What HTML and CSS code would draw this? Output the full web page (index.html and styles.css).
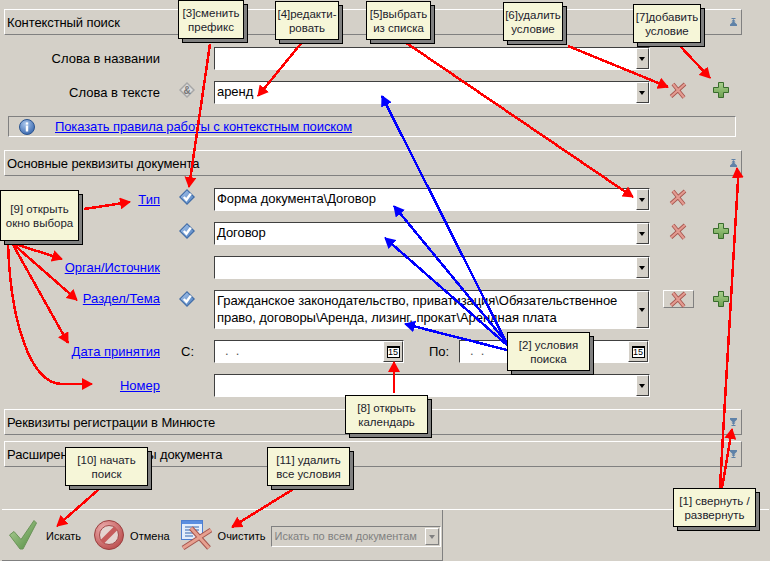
FILE: index.html
```html
<!DOCTYPE html>
<html lang="ru">
<head>
    <meta charset="UTF-8">
    <meta name="viewport" content="width=device-width, initial-scale=1.0">
    <title>Поиск документов</title>
    <link rel="stylesheet" href="styles.css">
</head>
<body>
    <svg class="defs" width="0" height="0">
        <defs>
            <linearGradient id="g-diamond" x1="0" y1="0" x2="1" y2="1">
                <stop offset="0" stop-color="#a8c6ec"/>
                <stop offset="1" stop-color="#4f7fbe"/>
            </linearGradient>
            <linearGradient id="g-plus" x1="0" y1="0" x2="0" y2="1">
                <stop offset="0" stop-color="#a9cf8d"/>
                <stop offset="1" stop-color="#6ca04f"/>
            </linearGradient>
            <linearGradient id="g-check" x1="0" y1="0" x2="1" y2="1">
                <stop offset="0" stop-color="#b5d39c"/>
                <stop offset="1" stop-color="#4f8a3f"/>
            </linearGradient>
            <radialGradient id="g-info" cx="0.4" cy="0.3" r="0.8">
                <stop offset="0" stop-color="#a9c6ec"/>
                <stop offset="1" stop-color="#2f5fa8"/>
            </radialGradient>
            <radialGradient id="g-stop" cx="0.35" cy="0.3" r="0.8">
                <stop offset="0" stop-color="#eeb0b0"/>
                <stop offset="1" stop-color="#b84848"/>
            </radialGradient>
            <symbol id="i-diamond" viewBox="0 0 16 16">
                <polygon points="8,0 16,8 8,16 0,8" fill="#3f6ba6"/>
                <polygon points="8,1.6 14.4,8 8,14.4 1.6,8" fill="url(#g-diamond)"/>
                <path d="M4.8 8l2.6 2.8L11.8 4.6" fill="none" stroke="#fff" stroke-width="2.4"/>
            </symbol>
            <symbol id="i-del" viewBox="0 0 18 18">
                <path d="M2 15.5L16 3M4 3l11 13.5" fill="none" stroke="#a5554e" stroke-width="3.8"/>
                <path d="M2 15.5L16 3M4 3l11 13.5" fill="none" stroke="#e39a90" stroke-width="2.2"/>
            </symbol>
            <symbol id="i-add" viewBox="0 0 16 16">
                <path d="M5.5 .5h5v5h5v5h-5v5h-5v-5h-5v-5h5z" fill="url(#g-plus)" stroke="#386c2c"/>
            </symbol>
            <symbol id="i-up" viewBox="0 0 7 8">
                <path d="M1.5 0h4v1h-4zM3.5 1L5.5 3.5h-4zM3.5 3L7 6.5v1.5H0V6.500z"/>
            </symbol>
            <symbol id="i-down" viewBox="0 0 7 8">
                <path d="M0 0h7v1.500L3.5 5 0 1.500zM1.500 4.500h4L3.500 7zM1.500 7h4v1h-4z"/>
            </symbol>
        </defs>
    </svg>

    <div class="page">
        <div class="section-head">
            <span>Контекстный поиск</span>
            <svg class="chevron"><use href="#i-up"/></svg>
        </div>
        <div class="conditions">
            <div class="label">Слова в названии</div>
            <div class="prefix"></div>
            <div class="field"><div class="value"></div><div class="drop"></div></div>
            <div class="cell"></div>
            <div class="cell"></div>

            <div class="label">Слова в тексте</div>
            <div class="prefix">
                <svg class="icon" viewBox="0 0 16 16">
                    <polygon points="8,0 16,8 8,16 0,8" fill="#a6a6a6"/>
                    <polygon points="8,2 14,8 8,14 2,8" fill="#dcdcdc"/>
                    <text x="8" y="11.500" class="amp">&amp;</text>
                </svg>
            </div>
            <div class="field"><div class="value">аренд</div><div class="drop"></div></div>
            <div class="cell cell-del"><svg class="icon-del"><use href="#i-del"/></svg></div>
            <div class="cell"><svg class="icon"><use href="#i-add"/></svg></div>
        </div>
        <div class="info-bar">
            <svg class="info-icon" viewBox="0 0 16 16">
                <circle cx="8" cy="8" r="7.500" fill="url(#g-info)" stroke="#2c5590"/>
                <rect x="6.800" y="6.500" width="2.400" height="6" fill="#fff"/>
                <rect x="6.800" y="3.400" width="2.400" height="2.200" fill="#fff"/>
            </svg>
            <a href="#">Показать правила работы с контекстным поиском</a>
        </div>

        <div class="section-head section-gap">
            <span>Основные реквизиты документа</span>
            <svg class="chevron"><use href="#i-up"/></svg>
        </div>
        <div class="conditions">
            <div class="label"><a href="#">Тип</a></div>
            <div class="prefix"><svg class="icon"><use href="#i-diamond"/></svg></div>
            <div class="field"><div class="value">Форма документа\Договор</div><div class="drop"></div></div>
            <div class="cell cell-del"><svg class="icon-del"><use href="#i-del"/></svg></div>
            <div class="cell"></div>

            <div class="label"></div>
            <div class="prefix"><svg class="icon"><use href="#i-diamond"/></svg></div>
            <div class="field"><div class="value">Договор</div><div class="drop"></div></div>
            <div class="cell cell-del"><svg class="icon-del"><use href="#i-del"/></svg></div>
            <div class="cell"><svg class="icon"><use href="#i-add"/></svg></div>

            <div class="label"><a href="#">Орган/Источник</a></div>
            <div class="prefix"></div>
            <div class="field"><div class="value"></div><div class="drop"></div></div>
            <div class="cell"></div>
            <div class="cell"></div>

            <div class="label label-top"><a href="#">Раздел/Тема</a></div>
            <div class="prefix"><svg class="icon"><use href="#i-diamond"/></svg></div>
            <div class="field field-tall"><div class="value">Гражданское законодательство, приватизация\Обязательственное право, договоры\Аренда, лизинг, прокат\Арендная плата</div><div class="drop"></div></div>
            <div class="cell cell-del"><div class="del-button"><svg class="icon-del"><use href="#i-del"/></svg></div></div>
            <div class="cell"><svg class="icon"><use href="#i-add"/></svg></div>

            <div class="label"><a href="#">Дата принятия</a></div>
            <div class="prefix prefix-text">С:</div>
            <div class="date-row">
                <div class="field field-date"><div class="value value-date">  .  .</div><div class="cal-button"><span class="cal-icon">15</span></div></div>
                <div class="date-label">По:</div>
                <div class="field field-date"><div class="value value-date">  .  .</div><div class="cal-button"><span class="cal-icon">15</span></div></div>
            </div>
            <div class="cell"></div>
            <div class="cell"></div>

            <div class="label"><a href="#">Номер</a></div>
            <div class="prefix"></div>
            <div class="field"><div class="value"></div><div class="drop"></div></div>
            <div class="cell"></div>
            <div class="cell"></div>
        </div>

        <div class="section-head section-gap-2">
            <span>Реквизиты регистрации в Минюсте</span>
            <svg class="chevron"><use href="#i-down"/></svg>
        </div>
        <div class="section-head section-gap-3">
            <span>Расширенные реквизиты документа</span>
            <svg class="chevron"><use href="#i-down"/></svg>
        </div>

        <div class="toolbar">
            <div class="toolbar-main">
                <svg class="tool-check" viewBox="0 0 28 30">
                    <path d="M.5 15L5 11.500l7 8L25 .5l2.500 2.500L14 29h-3z" fill="url(#g-check)" stroke="#6b9459"/>
                </svg>
                <span class="tool-text text-search">Искать</span>
                <svg class="tool-stop" viewBox="0 0 30 30">
                    <circle cx="15" cy="15" r="14.500" fill="url(#g-stop)" stroke="#9a4040"/>
                    <circle cx="15" cy="15" r="9.500" fill="#e4d4d0" stroke="#a04a4a"/>
                    <path d="M8 22L22 8" stroke="#c65c5c" stroke-width="5"/>
                </svg>
                <span class="tool-text text-cancel">Отмена</span>
                <svg class="tool-clear" viewBox="0 0 31 31">
                    <rect x=".5" y=".5" width="21" height="19" fill="#e3edfb" stroke="#4d7fd0"/>
                    <rect x="1" y="1" width="20" height="3" fill="#5a8ee0"/>
                    <path d="M4 7h14M4 10h14M4 13h8M4 16h8" stroke="#6f93c8" stroke-width="1.500"/>
                    <path d="M2 28L30 10M10 8l18 20" fill="none" stroke="#a5554e" stroke-width="5"/>
                    <path d="M2 28L30 10M10 8l18 20" fill="none" stroke="#e6a090" stroke-width="3"/>
                </svg>
                <span class="tool-text text-clear">Очистить</span>
                <div class="scope">
                    <span>Искать по всем документам</span>
                    <div class="scope-drop"></div>
                </div>
            </div>
        </div>
    </div>

    <!-- стрелки поверх формы -->
    <svg class="arrows" viewBox="0 0 770 561">
        <defs>
            <marker id="head-red" markerUnits="userSpaceOnUse" markerWidth="11" markerHeight="12" refX="10" refY="6" orient="auto">
                <path d="M0 0L11 6L0 12z" fill="#f00"/>
            </marker>
            <marker id="head-blue" markerUnits="userSpaceOnUse" markerWidth="11" markerHeight="12" refX="10" refY="6" orient="auto">
                <path d="M0 0L11 6L0 12z" fill="#00f"/>
            </marker>
        </defs>
        <g class="arrows-blue" marker-end="url(#head-blue)">
            <path d="M505 340L382 96"/>
            <path d="M507 343L394 206"/>
            <path d="M507 345L385 238"/>
            <path d="M507 350L405 324"/>
        </g>
        <g class="arrows-red" marker-end="url(#head-red)">
            <path d="M210 44L189 187"/>
            <path d="M303 41L258 96"/>
            <path d="M402 40L633 197"/>
            <path d="M568 46L668 87"/>
            <path d="M680 46L710 78"/>
            <path d="M720 488L725 400L738 180L737 168"/>
            <path d="M722 488L732 429"/>
            <path d="M394 393L394 362"/>
            <path d="M84 209L130 202"/>
            <path d="M12 243L62 259"/>
            <path d="M12 243L77 300"/>
            <path d="M12 243L68 343"/>
            <path d="M8 241C10 320 30 384 62 384L92 384"/>
            <path d="M106 483L57 526"/>
            <path d="M308 480L232 527"/>
        </g>
    </svg>

    <div class="note note-3">[3]сменить<br>префикс</div>
    <div class="note note-4">[4]редакти-<br>ровать</div>
    <div class="note note-5">[5]выбрать<br>из списка</div>
    <div class="note note-6">[6]удалить<br>условие</div>
    <div class="note note-7">[7]добавить<br>условие</div>
    <div class="note note-9">[9] открыть<br>окно выбора</div>
    <div class="note note-2">[2] условия<br>поиска</div>
    <div class="note note-8">[8] открыть<br>календарь</div>
    <div class="note note-10">[10] начать<br>поиск</div>
    <div class="note note-11">[11] удалить<br>все условия</div>
    <div class="note note-1">[1] свернуть /<br>развернуть</div>
</body>
</html>
```

FILE: styles.css
```css
html, body {
    margin: 0;
    height: 561px;
    overflow: hidden;
}
body {
    position: relative;
    background-color: #d4d0c8;
    color: #000;
    font-family: 'Liberation Sans', Arial, sans-serif;
    font-size: 13px;
}
a {
    color: #00f;
    text-decoration: underline;
}
.defs {
    position: absolute;
}
.page {
    padding-top: 9px;
}

/* заголовки разделов */
.section-head {
    box-sizing: border-box;
    display: flex;
    align-items: center;
    justify-content: space-between;
    width: 738px;
    height: 26px;
    margin-left: 4px;
    padding: 0 4px 0 2px;
    border-top: 1px solid #fff;
    border-left: 1px solid #fff;
    border-right: 1px solid #808080;
    border-bottom: 1px solid #808080;
    letter-spacing: -0.1px;
}
.section-gap {
    margin-top: 13px;
}
.section-gap-2 {
    margin-top: 12px;
}
.section-gap-3 {
    margin-top: 6px;
}
.chevron {
    width: 7px;
    height: 8px;
    fill: #5f82a8;
}

/* строки условий */
.conditions {
    display: grid;
    grid-template-columns: 156px 54px 436px 56px 30px;
    row-gap: 11px;
    margin: 12px 0 0 4px;
}
.label {
    text-align: right;
    align-self: center;
}
.label-top {
    align-self: start;
    padding-top: 1px;
}
.prefix, .cell {
    display: flex;
    align-items: flex-start;
    justify-content: center;
    padding-top: 1px;
}
.cell-del {
    padding-top: 0;
}
.prefix-text {
    align-items: center;
    justify-content: flex-start;
    padding: 0 0 0 21px;
}
.icon {
    width: 16px;
    height: 16px;
}
.icon-del {
    width: 18px;
    height: 18px;
}
.amp {
    font-size: 10px;
    font-weight: bold;
    fill: #777;
    text-anchor: middle;
}
.del-button {
    box-sizing: border-box;
    display: flex;
    align-items: center;
    justify-content: center;
    width: 31px;
    height: 18px;
    border-top: 1px solid #fff;
    border-left: 1px solid #fff;
    border-right: 1px solid #808080;
    border-bottom: 1px solid #808080;
}

/* поля ввода */
.field {
    box-sizing: border-box;
    display: flex;
    height: 23px;
    background-color: #fff;
    border-top: 1px solid #404040;
    border-left: 1px solid #404040;
    border-right: 1px solid #fff;
    border-bottom: 1px solid #fff;
}
.field-tall {
    height: 39px;
}
.field-date {
    width: 190px;
}
.value {
    flex: 1;
    padding: 1px 2px 0 2px;
    line-height: 17px;
    letter-spacing: -0.06px;
}
.value-date {
    color: #555;
    white-space: pre;
    padding-left: 3px;
}
.drop {
    box-sizing: border-box;
    position: relative;
    width: 13px;
    background-color: #d4d0c8;
    border-top: 1px solid #fff;
    border-left: 1px solid #fff;
    border-right: 1px solid #404040;
    border-bottom: 1px solid #404040;
}
.drop::after {
    content: "";
    position: absolute;
    left: 2px;
    top: 50%;
    margin-top: -2px;
    border-top: 4px solid #000;
    border-left: 3px solid transparent;
    border-right: 3px solid transparent;
}
.cal-button {
    box-sizing: border-box;
    display: flex;
    align-items: center;
    justify-content: center;
    width: 20px;
    background-color: #d4d0c8;
    border-top: 1px solid #fff;
    border-left: 1px solid #fff;
    border-right: 1px solid #404040;
    border-bottom: 1px solid #404040;
}
.cal-icon {
    box-sizing: border-box;
    width: 13px;
    height: 12px;
    background-color: #fff;
    border: 1px solid #000;
    border-top-width: 2px;
    font-size: 9px;
    line-height: 9px;
    text-align: center;
}
.date-row {
    display: flex;
    align-items: center;
}
.date-label {
    width: 30px;
    margin-left: 25px;
}

/* строка с правилами */
.info-bar {
    box-sizing: border-box;
    display: flex;
    align-items: center;
    gap: 20px;
    width: 728px;
    height: 21px;
    margin: 12px 0 0 8px;
    padding-left: 10px;
    border-top: 1px solid #808080;
    border-left: 1px solid #808080;
    border-right: 1px solid #fff;
    border-bottom: 1px solid #fff;
    letter-spacing: -0.1px;
}
.info-icon {
    width: 16px;
    height: 16px;
}

/* нижняя панель */
.toolbar {
    margin: 42px 1px 0 2px;
    border-top: 1px solid #fff;
}
.toolbar-main {
    box-sizing: border-box;
    display: flex;
    align-items: center;
    width: 441px;
    height: 51px;
    padding-left: 7px;
    border-right: 1px solid #808080;
    border-bottom: 1px solid #808080;
}
.tool-text {
    font-size: 11px;
    padding-top: 2px;
}
.tool-check {
    width: 28px;
    height: 30px;
}
.text-search {
    margin-left: 9px;
}
.tool-stop {
    width: 30px;
    height: 30px;
    margin-left: 13px;
}
.text-cancel {
    margin-left: 6px;
}
.tool-clear {
    width: 31px;
    height: 31px;
    margin-left: 11px;
}
.text-clear {
    margin-left: 6px;
}
.scope {
    box-sizing: border-box;
    display: flex;
    align-items: center;
    justify-content: space-between;
    width: 170px;
    height: 21px;
    margin: 2px 0 0 6px;
    padding: 0 1px 0 2px;
    color: #808080;
    font-size: 11px;
    border-top: 1px solid #808080;
    border-left: 1px solid #808080;
    border-right: 1px solid #fff;
    border-bottom: 1px solid #fff;
}
.scope span {
    white-space: nowrap;
}
.scope-drop {
    box-sizing: border-box;
    position: relative;
    flex: none;
    width: 14px;
    height: 17px;
    border-top: 1px solid #fff;
    border-left: 1px solid #fff;
    border-right: 1px solid #808080;
    border-bottom: 1px solid #808080;
}
.scope-drop::after {
    content: "";
    position: absolute;
    left: 3px;
    top: 6px;
    border-top: 4px solid #808080;
    border-left: 3px solid transparent;
    border-right: 3px solid transparent;
}

/* стрелки и подсказки */
.arrows {
    position: absolute;
    left: 0;
    top: 0;
    width: 770px;
    height: 561px;
}
.arrows g path {
    fill: none;
    shape-rendering: crispEdges;
}
.arrows-red path {
    stroke: #f00;
    stroke-width: 2.5;
}
.arrows-blue path {
    stroke: #00f;
    stroke-width: 2.5;
}
.note {
    box-sizing: border-box;
    position: absolute;
    display: flex;
    align-items: center;
    justify-content: center;
    text-align: center;
    background-color: #f6f6d8;
    border: 1px solid #000;
    box-shadow: 4px 4px 0 -1px #808080, 4px 4px 0 0 #000;
    color: #1c1c2c;
    font-size: 11.5px;
    line-height: 14px;
}
.note-3 { left: 178px; top: 0; width: 66px; height: 39px; }
.note-4 { left: 275px; top: 1px; width: 64px; height: 39px; }
.note-5 { left: 366px; top: 1px; width: 65px; height: 39px; }
.note-6 { left: 503px; top: 2px; width: 60px; height: 39px; }
.note-7 { left: 633px; top: 4px; width: 68px; height: 39px; }
.note-9 { left: 0; top: 190px; width: 79px; height: 51px; }
.note-2 { left: 507px; top: 332px; width: 83px; height: 39px; }
.note-8 { left: 345px; top: 395px; width: 83px; height: 39px; }
.note-10 { left: 65px; top: 447px; width: 83px; height: 39px; }
.note-11 { left: 267px; top: 447px; width: 83px; height: 39px; }
.note-1 { left: 673px; top: 488px; width: 83px; height: 39px; }
```
